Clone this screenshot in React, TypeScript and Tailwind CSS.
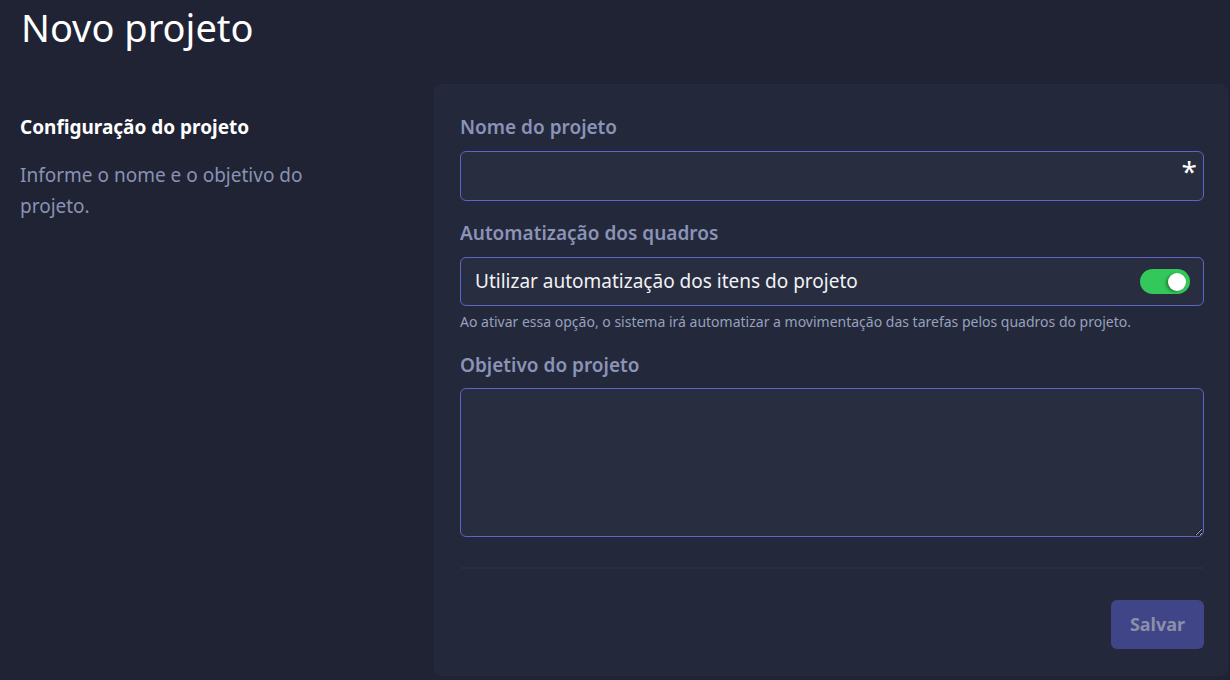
import React, { useState } from "react";

const font = { fontFamily: '"Noto Sans", "Open Sans", sans-serif' };

function Toggle({ on, onChange }: { on: boolean; onChange: () => void }) {
  return (
    <button
      type="button"
      onClick={onChange}
      className={`relative h-[25px] w-[50px] rounded-full ${on ? "bg-[#34c759]" : "bg-[#4b5066]"}`}
    >
      <span
        className={`absolute top-[3.5px] h-[18px] w-[18px] rounded-full bg-white shadow-[-2px_1px_3px_rgba(0,0,0,0.35)] ${on ? "right-[4px]" : "left-[4px]"}`}
      />
    </button>
  );
}

export default function App() {
  const [auto, setAuto] = useState(true);

  return (
    <div className="min-h-[680px] bg-[#1f2333] text-white" style={font}>
      <h1 className="px-[21px] pt-[1px] text-[38px] font-normal leading-[52px] text-white">
        Novo projeto
      </h1>

      <div className="mt-[31px] flex pr-[2px]">
        {/* Left column */}
        <div className="w-[434px] shrink-0 pl-[20px] pt-[30px]">
          <h2 className="text-[19px] font-bold leading-[26px] text-white">
            Configuração do projeto
          </h2>
          <p className="mt-[20px] w-[330px] text-[19px] leading-[31px] text-[#8a92b4]">
            Informe o nome e o objetivo do projeto.
          </p>
        </div>

        {/* Card */}
        <div className="flex-1 rounded-lg border border-[#262a3b] bg-[#23283a] pb-[26px] pl-[25px] pr-[23px] pt-[29px]">
          <label className="block text-[19px] font-semibold leading-[26px] text-[#8b93b7]">
            Nome do projeto
          </label>
          <div className="relative mt-[11px]">
            <input
              className="h-[50px] w-full rounded-md border border-[#5d65c6] bg-[#282d3f] px-[14px] text-[18px] text-white outline-none"
              type="text"
            />
            <span className="absolute right-[7px] top-[5px] text-[28px] leading-[30px] text-white">*</span>
          </div>

          <label className="mt-[19px] block text-[19px] font-semibold leading-[26px] text-[#8b93b7]">
            Automatização dos quadros
          </label>
          <div className="mt-[11px] flex h-[49px] items-center justify-between rounded-md border border-[#5d65c6] bg-[#282d3f] pl-[14px] pr-[13px]">
            <span className="text-[19px] text-[#f1f2f6]">
              Utilizar automatização dos itens do projeto
            </span>
            <Toggle on={auto} onChange={() => setAuto(!auto)} />
          </div>
          <p className="mt-[6px] text-[14px] leading-[20px] text-[#98a0bf]">
            Ao ativar essa opção, o sistema irá automatizar a movimentação das tarefas pelos quadros do projeto.
          </p>

          <label className="mt-[20px] block text-[19px] font-semibold leading-[26px] text-[#8b93b7]">
            Objetivo do projeto
          </label>
          <textarea className="mt-[10px] block h-[149px] w-full rounded-md border border-[#5d65c6] bg-[#282d3f] px-[14px] py-[10px] text-[18px] text-white outline-none" />

          <div className="mt-[30px] h-[2px] bg-[#292d3f]" />

          <div className="mt-[31px] flex justify-end">
            <button
              type="button"
              className="h-[49px] w-[93px] rounded-md bg-[#3f4587] text-[18px] font-bold text-[#8a8fab]"
            >
              Salvar
            </button>
          </div>
        </div>
      </div>
    </div>
  );
}
